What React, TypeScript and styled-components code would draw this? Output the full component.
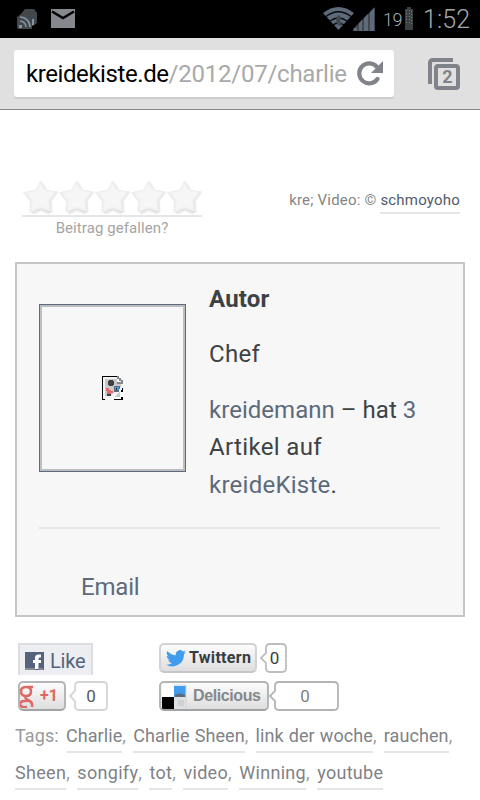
import React from "react";
import styled, { createGlobalStyle } from "styled-components";

const GlobalStyle = createGlobalStyle`
  * { box-sizing: border-box; }
  body { margin: 0; background: #fff; overflow: hidden; }
  svg { display: block; flex: none; }
`;

const Page = styled.div`
  width: 480px;
  height: 800px;
  overflow: hidden;
  display: flex;
  flex-direction: column;
  background: #fff;
  font-family: Roboto, "Noto Sans", sans-serif;
`;

const StatusBar = styled.header`
  height: 38px;
  flex: none;
  background: #000;
  display: flex;
  align-items: flex-start;
  padding: 0 9px 0 17px;
`;

const StatusIcon = styled.span<{ $top: number; $gap: number }>`
  margin-top: ${(p) => p.$top}px;
  margin-right: ${(p) => p.$gap}px;
`;

const StatusText = styled.span<{ $size: number; $top: number; $width: number; $spacing: number; $color: string }>`
  width: ${(p) => p.$width}px;
  margin-top: ${(p) => p.$top}px;
  font-size: ${(p) => p.$size}px;
  line-height: 30px;
  letter-spacing: ${(p) => p.$spacing}px;
  font-weight: 300;
  color: ${(p) => p.$color};
  white-space: nowrap;
`;

const Spacer = styled.span`
  flex: 1;
`;

const Toolbar = styled.nav`
  height: 72px;
  flex: none;
  background: #e0e0e0;
  border-bottom: 1px solid #85888d;
  display: flex;
  align-items: flex-start;
  padding: 12px 20px 0 14px;
`;

const AddressBar = styled.div`
  width: 380px;
  height: 47px;
  background: #fff;
  border-radius: 3px;
  box-shadow: 0 2px 1px #cdcdcd;
  display: flex;
  align-items: center;
  padding: 0 11px 0 12px;
`;

const Url = styled.span`
  width: 331px;
  font-size: 24px;
  line-height: 48px;
  letter-spacing: -0.42px;
  color: #000;
  white-space: nowrap;
`;

const UrlPath = styled.span`
  color: #a9a9a9;
  letter-spacing: -0.24px;
`;

const TabSwitcher = styled.button`
  margin: 8px 0 0 34px;
  padding: 0;
  border: 0;
  background: none;
  width: 32px;
  height: 32px;
  position: relative;
`;

const TabCount = styled.span`
  position: absolute;
  left: 13px;
  top: 10px;
  width: 13px;
  font: 700 18px/18px Roboto, sans-serif;
  color: #808389;
  text-align: center;
`;

const Meta = styled.section`
  height: 152px;
  flex: none;
  display: flex;
  justify-content: space-between;
  padding: 69px 20px 0 22px;
`;

const Rating = styled.div`
  width: 180px;
`;

const Stars = styled.div`
  height: 38px;
  display: flex;
  border-bottom: 2px solid #e6e6e6;
`;

const RatingCaption = styled.div`
  font-size: 15px;
  line-height: 23px;
  letter-spacing: 0.08px;
  color: #a4a4a4;
  text-align: center;
`;

const Credits = styled.p`
  margin: 10px 0 0;
  font-size: 15px;
  line-height: 22px;
  letter-spacing: 0.2px;
  color: #858585;
  white-space: nowrap;
`;

const CreditLink = styled.a`
  display: inline-block;
  height: 25px;
  color: #4f5b6b;
  border-bottom: 2px solid #e6e6e6;
`;

const AuthorBox = styled.section`
  margin: 0 15px;
  height: 355px;
  flex: none;
  border: 2px solid #c4c5c6;
  background: #f7f7f7;
  padding: 0 23px 0 22px;
`;

const AuthorInfo = styled.div`
  height: 265px;
  display: flex;
  border-bottom: 2px solid #e5e5e5;
`;

const Portrait = styled.div`
  margin: 40px 23px 0 0;
  width: 147px;
  height: 168px;
  flex: none;
  border: 1px solid #5c6a7b;
  box-shadow: inset 0 0 0 2px #bdbebf;
  display: flex;
  align-items: center;
  justify-content: center;
`;

const Bio = styled.div`
  padding-top: 17px;
  font-size: 24px;
  line-height: 37.5px;
  letter-spacing: 0.03px;
  color: #3d4345;
  white-space: nowrap;
`;

const BioName = styled.h2`
  margin: 0 0 17.5px;
  font: inherit;
  font-weight: 700;
  letter-spacing: 0.15px;
`;

const BioText = styled.p`
  margin: 0 0 18px;
`;

const BioPhrase = styled.span`
  letter-spacing: 0.35px;
`;

const BioLink = styled.a`
  color: #5c6a7b;
`;

const BioSiteLink = styled(BioLink)`
  letter-spacing: 0.25px;
`;

const EmailLink = styled.a`
  display: block;
  padding: 39px 0 0 42px;
  font-size: 24px;
  line-height: 38px;
  letter-spacing: -0.2px;
  color: #5c6a7b;
`;

const ShareGrid = styled.section`
  flex: none;
  height: 100px;
  padding: 26px 0 0 18px;
  display: grid;
  grid-template-columns: 141px 1fr;
  grid-template-rows: 38px 30px;
  align-items: start;
`;

const ShareItem = styled.div`
  display: flex;
`;

const ShareButton = styled.button<{ $width: number; $dark?: boolean }>`
  width: ${(p) => p.$width}px;
  height: 30px;
  padding: 0;
  border: 2px solid ${(p) => (p.$dark ? "#b4b5b6" : "#d2d3d4")};
  border-bottom-color: ${(p) => (p.$dark ? "#a2a3a4" : "#c5c6c7")};
  border-radius: 5px;
  background: linear-gradient(#fcfcfc, #dedede);
  display: flex;
  align-items: center;
  overflow: hidden;
`;

const LikeButton = styled.button`
  width: 75px;
  height: 32px;
  border: 2px solid #dcdddf;
  border-bottom: 0;
  background: #eceef1;
  padding: 1px 0 0 5px;
  display: flex;
  align-items: center;
`;

const ButtonLabel = styled.span<{ $size: number; $color: string; $bold?: boolean; $left: number; $spacing?: number; $family?: string }>`
  margin-left: ${(p) => p.$left}px;
  font-family: ${(p) => p.$family || "Roboto"}, sans-serif;
  font-size: ${(p) => p.$size}px;
  line-height: 26px;
  font-weight: ${(p) => (p.$bold ? 700 : 400)};
  letter-spacing: ${(p) => p.$spacing || 0}px;
  color: ${(p) => p.$color};
  white-space: nowrap;
`;

const BubbleBox = styled.span<{ $width: number; $gap: number }>`
  position: relative;
  width: ${(p) => p.$width}px;
  height: 30px;
  margin-left: ${(p) => p.$gap}px;
`;

const BubbleShape = styled.svg`
  position: absolute;
  inset: 0;
`;

const BubbleCount = styled.span<{ $color: string; $inset: number }>`
  position: relative;
  display: block;
  padding-left: ${(p) => p.$inset}px;
  text-align: center;
  font-size: 17px;
  line-height: 30px;
  color: ${(p) => p.$color};
`;

const Tags = styled.p`
  margin: 0 0 0 15px;
  width: 455px;
  font-size: 18px;
  line-height: 37.5px;
  color: #999a9c;
`;

const TagLine = styled.span<{ $spacing: number; $gap: number }>`
  display: flex;
  height: 37px;
  white-space: pre;
  letter-spacing: ${(p) => p.$spacing}px;
  word-spacing: ${(p) => p.$gap}px;
`;

const Tag = styled.a`
  height: 36px;
  color: #808287;
  word-spacing: 0.5px;
  border-bottom: 2px solid #e6e6e6;
`;

function Bubble({ width, gap, inset = 5, color = "#55585a", stroke = "#d4d4d4" }: { width: number; gap: number; inset?: number; color?: string; stroke?: string }) {
  const r = width - 1;
  return (
    <BubbleBox $width={width} $gap={gap}>
      <BubbleShape width={width} height="30">
        <path
          d={`M10 1H${r - 4}Q${r} 1 ${r} 5V25Q${r} 29 ${r - 4} 29H10Q6 29 6 25V20L1 15L6 10V5Q6 1 10 1Z`}
          fill="#fff"
          stroke={stroke}
          strokeWidth="1.8"
        />
      </BubbleShape>
      <BubbleCount $color={color} $inset={inset}>0</BubbleCount>
    </BubbleBox>
  );
}

function Star() {
  return (
    <svg width="36" height="36" viewBox="-0.5 -0.7 36 36">
      <path d="M19 2L24.5 11L35 12.5L28.5 21L29.5 32L26 34L18.5 30.5L11 34L7.5 31.5L8.5 22L1.5 13L14 10.5Z" fill="#dfe0e1" stroke="#ededed" strokeWidth="1.5" strokeLinejoin="round" />
      <path d="M18 2.5L22.5 10.5L33 12L26.5 20.5L27.5 30.5L18 28L8.5 31.5L9.500 21L3 13L13.5 10.5Z" fill="#f6f6f6" stroke="#efefef" strokeWidth="1.5" strokeLinejoin="round" />
    </svg>
  );
}

function FeedIcon() {
  return (
    <svg width="21" height="21" viewBox="0 0 21 21" fill="none">
      <path d="M4 5L8 0H17L20 4V14L16 17H15V20H2Q0 20 0 18V8Z" fill="#41474b" />
      <path d="M15 10h2v6h-2z" fill="#8493a5" />
      <path d="M3 8A10 10 0 0 1 13 18M3 12A6 6 0 0 1 9 18" stroke="#8493a5" strokeWidth="1.6" />
      <rect x="2" y="16" width="3" height="3" fill="#8493a5" />
    </svg>
  );
}

function MailIcon() {
  return (
    <svg width="24" height="19">
      <rect width="24" height="19" fill="#85898e" />
      <path d="M1 2.5L12 9L23 2.5" fill="none" stroke="#000" strokeWidth="2.5" />
    </svg>
  );
}

function WifiIcon() {
  return (
    <svg width="31" height="24" viewBox="0 0 31 24" fill="none">
      <path d="M0 6Q15.5-6 31 6L15.5 23Z" fill="#5c6a7b" />
      <path d="M3 9.5Q15.5 0 28 9.5M7 14Q15.5 8 24 14M10 18Q15.5 14 21 18" stroke="#080a0c" strokeWidth="1.5" />
      <path d="M15 8l3 2-1 4 2 3-2 2-3-2-1-5z" fill="#41474b" />
    </svg>
  );
}

function SignalIcon() {
  return (
    <svg width="22" height="24" viewBox="0 0 22 24">
      <path d="M0 24V22L22 0V24Z" fill="#41474b" />
      <path d="M1 21H4V24H1ZM6 16L9 13V24H6ZM11 11L15 7V24H11ZM17 5L21 1V24H17Z" fill="#5c6a7b" />
    </svg>
  );
}

function BatteryIcon() {
  return (
    <svg width="8" height="23">
      <path d="M2 0H6V2H8V23H0V2H2Z" fill="#3b4043" />
      <path d="M1.5 3V18M4.5 3V18M6.5 4V18" stroke="#777a7e" strokeDasharray="1 2" />
    </svg>
  );
}

function ReloadIcon() {
  return (
    <svg width="26" height="26" viewBox="0 0 26 26" fill="none">
      <path d="M20.5 18A10 10 0 1 1 20 6" stroke="#808389" strokeWidth="4.2" strokeLinecap="round" />
      <path d="M26 0V12H14Z" fill="#808389" />
    </svg>
  );
}

function TabsIcon() {
  return (
    <svg width="32" height="32" fill="none" stroke="#808389">
      <path d="M2 26V5Q2 2 5 2H25" strokeWidth="4" />
      <rect x="8" y="8" width="22" height="22" rx="2" strokeWidth="4" />
    </svg>
  );
}

function BrokenImage() {
  return (
    <svg width="21" height="24" shapeRendering="crispEdges">
      <path d="M1 1H15L21 7V11L8 23H1Z" fill="#f4f4f4" />
      <path d="M3 3H15V8H19V11L8 20H3Z" fill="#c8c9ca" />
      <path d="M21 13V23H12Z" fill="#fff" />
      <path d="M18 15V21H13Z" fill="#c8c9ca" />
      <path d="M0 0H15V1H1V23H3V24H0ZM12 23H19V21H21V24H12ZM20 12H21V16H19V14H20Z" fill="#000" />
      <path d="M15 0H17V2H19V4H21V8H15V6H19V5H17V3H15Z" fill="#83888d" />
      <path d="M16 3H17V5H19V6H16Z" fill="#fff" />
      <path d="M7 4H11V5H12V9H11V10H7V9H6V5H7ZM5 18H9V20H5Z" fill="#3d4345" />
      <path d="M4 12H7V14H9V15H11V17H9V18H5V15H4Z" fill="#e36c6a" />
      <path d="M12 10H18V13H17V16H12Z" fill="#5c6a7b" />
      <path d="M13 11H17V14H13Z" fill="#429ced" />
      <path d="M14 12H15V14H14Z" fill="#222" />
    </svg>
  );
}

function FacebookIcon() {
  return (
    <svg width="19" height="18">
      <rect width="19" height="18" fill="#55647b" />
      <path d="M10 17V11H8V8H10V6Q10 2.5 13.5 2.5H16V5.5H14.5Q13.5 5.5 13.5 7V8H16V11H13.5V17" fill="#fff" />
      <path d="M0 17H10M14 17H18" stroke="#888d98" strokeWidth="2" />
    </svg>
  );
}

function GoogleIcon() {
  return (
    <svg width="15" height="23" viewBox="0 0 15 23" fill="none" stroke="#dd6864">
      <path d="M13 2H6Q1 2 1 6.5T6 11T11 6.5T6 2M6 11Q4 13 8 15Q13 17 12 22M10 16Q0 15 0 19T7 22" strokeWidth="2.5" />
    </svg>
  );
}

function TwitterIcon() {
  return (
    <svg width="20" height="17" viewBox="0 0 24 20">
      <path d="M24 2.400a9 9 0 0 1-2.800.8A5 5 0 0 0 23.300.4a9 9 0 0 1-3.100 1.200A4.900 4.900 0 0 0 11.800 6 14 14 0 0 1 1.700.9a5 5 0 0 0 1.500 6.600 5 5 0 0 1-2.200-.6 4.900 4.900 0 0 0 3.900 4.900 5 5 0 0 1-2.200.1 4.900 4.900 0 0 0 4.600 3.400A10 10 0 0 1 0 17.300a14 14 0 0 0 21.500-12.400A10 10 0 0 0 24 2.400Z" fill="#429ced" />
    </svg>
  );
}

function DeliciousIcon() {
  return (
    <svg width="26" height="25">
      <rect x="1" width="12" height="13" fill="#fff" />
      <rect x="13" y="2" width="12" height="11" fill="#429ced" />
      <path d="M14 11Q18 8 24 11V13H14Z" fill="#5c6a7b" />
      <rect x="1" y="13" width="12" height="12" fill="#000" />
      <rect x="13" y="13" width="12" height="12" fill="#dfe0e1" />
      <path d="M17 16H23V22H17Z" fill="#d0d1d2" />
      <path d="M13 1H25V24" stroke="#d2d3d4" fill="none" />
    </svg>
  );
}

const tagLines = [
  ["Charlie", "Charlie Sheen", "link der woche", "rauchen"],
  ["Sheen", "songify", "tot", "video", "Winning", "youtube"],
];

export default function App() {
  return (
    <Page>
      <GlobalStyle />
      <StatusBar>
        <StatusIcon $top={9} $gap={13}><FeedIcon /></StatusIcon>
        <StatusIcon $top={9} $gap={0}><MailIcon /></StatusIcon>
        <Spacer />
        <StatusIcon $top={7} $gap={-1}><WifiIcon /></StatusIcon>
        <StatusIcon $top={7} $gap={8}><SignalIcon /></StatusIcon>
        <StatusText $size={18} $top={5} $width={22} $spacing={-0.6} $color="#a6afb9">19</StatusText>
        <StatusIcon $top={7} $gap={10}><BatteryIcon /></StatusIcon>
        <StatusText $size={25} $top={5} $width={48} $spacing={0.1} $color="#a5a8ab">1:52</StatusText>
      </StatusBar>
      <Toolbar>
        <AddressBar>
          <Url>kreidekiste.de<UrlPath>/2012/07/charlie</UrlPath></Url>
          <ReloadIcon />
        </AddressBar>
        <TabSwitcher aria-label="Tabs">
          <TabsIcon />
          <TabCount>2</TabCount>
        </TabSwitcher>
      </Toolbar>
      <Meta>
        <Rating>
          <Stars>{[0, 1, 2, 3, 4].map((n) => <Star key={n} />)}</Stars>
          <RatingCaption>Beitrag gefallen?</RatingCaption>
        </Rating>
        <Credits>kre; Video: © <CreditLink>schmoyoho</CreditLink></Credits>
      </Meta>
      <AuthorBox>
        <AuthorInfo>
          <Portrait><BrokenImage /></Portrait>
          <Bio>
            <BioName>Autor</BioName>
            <BioText><BioPhrase>Chef</BioPhrase></BioText>
            <BioText>
              <BioLink>kreidemann</BioLink> – hat <BioLink>3</BioLink><br />
              <BioPhrase>Artikel auf</BioPhrase><br />
              <BioSiteLink>kreideKiste</BioSiteLink>.
            </BioText>
          </Bio>
        </AuthorInfo>
        <EmailLink>Email</EmailLink>
      </AuthorBox>
      <ShareGrid>
        <ShareItem>
          <LikeButton>
            <FacebookIcon />
            <ButtonLabel $size={20} $left={6} $spacing={-0.2} $color="#55647b">Like</ButtonLabel>
          </LikeButton>
        </ShareItem>
        <ShareItem>
          <ShareButton $width={98}>
            <ButtonLabel $size={16} $left={5} $color="#429ced"><TwitterIcon /></ButtonLabel>
            <ButtonLabel $size={16} $left={3} $spacing={0.3} $bold $color="#373d40">Twittern</ButtonLabel>
          </ShareButton>
          <Bubble width={27} gap={3} inset={2} color="#373d40" stroke="#bcbdbe" />
        </ShareItem>
        <ShareItem>
          <ShareButton $width={48} $dark>
            <GoogleIcon />
            <ButtonLabel $size={16} $left={5} $bold $color="#dd6864">+1</ButtonLabel>
          </ShareButton>
          <Bubble width={39} gap={3} />
        </ShareItem>
        <ShareItem>
          <ShareButton $width={110} $dark>
            <DeliciousIcon />
            <ButtonLabel $size={16} $left={6} $bold $color="#85888b" $spacing={-0.4} $family={'"Liberation Sans"'}>Delicious</ButtonLabel>
          </ShareButton>
          <Bubble width={70} gap={0} inset={2} color="#808080" stroke="#b3b4b5" />
        </ShareItem>
      </ShareGrid>
      <Tags>
        {tagLines.map((line, i) => (
          <TagLine key={i} $spacing={i === 0 ? 0.08 : 0.3} $gap={i === 0 ? 2.7 : 2.6}>
            {i === 0 && "Tags: "}
            {line.map((tag, j) => (
              <React.Fragment key={tag}>
                <Tag>{tag}</Tag>
                {i === 1 && j === line.length - 1 ? "" : ", "}
              </React.Fragment>
            ))}
          </TagLine>
        ))}
      </Tags>
    </Page>
  );
}
